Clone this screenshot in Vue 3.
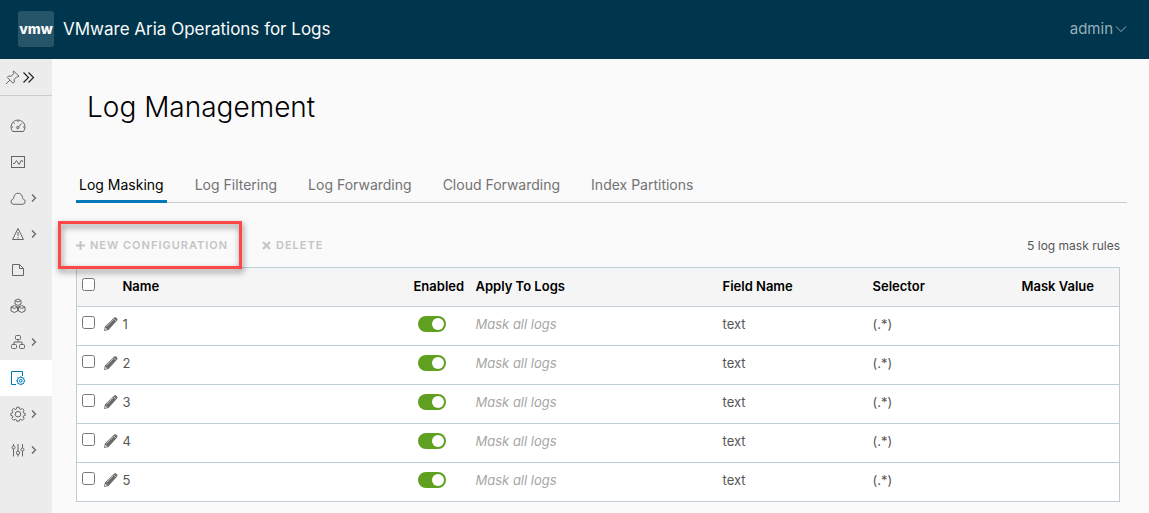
<script setup>
  import {ref} from "vue";

  const navItems = [
    {icon: 'dashboard', label: 'Dashboards'},
    {icon: 'explore', label: 'Explore Logs'},
    {icon: 'cloud', label: 'Cloud', expand: true},
    {icon: 'alert', label: 'Alerts', expand: true},
    {icon: 'file', label: 'Reports'},
    {icon: 'packs', label: 'Content Packs'},
    {icon: 'network', label: 'Integrations', expand: true},
    {icon: 'logs', label: 'Log Management', active: true},
    {icon: 'gear', label: 'Configuration', expand: true},
    {icon: 'sliders', label: 'Management', expand: true},
  ];

  const tabs = ['Log Masking', 'Log Filtering', 'Log Forwarding', 'Cloud Forwarding', 'Index Partitions'];
  const activeTab = ref('Log Masking');

  const rules = ref([1, 2, 3, 4, 5].map((n) => ({
    name: String(n),
    checked: false,
    enabled: true,
    apply: 'Mask all logs',
    field: 'text',
    selector: '(.*)',
    mask: '',
  })));

  const allChecked = ref(false);
  const toggleAll = () => {
    rules.value.forEach((r) => {
      r.checked = allChecked.value;
    });
  }
</script>

<template>
  <div class="app">
    <header class="header">
      <span class="logo">vmw</span>
      <span class="product">VMware Aria Operations for Logs</span>
      <button class="user">
        admin
        <svg width="12" height="8" viewBox="0 0 12 8"><path d="M1 1.5l5 5 5-5" /></svg>
      </button>
    </header>

    <div class="body">
      <nav class="sidebar">
        <div class="pin-row">
          <button aria-label="Pin menu">
            <svg width="15" height="15" viewBox="0 0 15 15">
              <path d="M8.5 1l5.5 5.2-1.3.8-.9-.3-2.6 2.8.2 2.4-1.3 1.3L2.3 7.4l1.2-1.3 2.5.1 2.8-2.6-.4-1.2zM4.8 10.2L1 14" />
            </svg>
          </button>
          <button aria-label="Expand menu">
            <svg class="expand" width="13" height="13" viewBox="0 0 13 13">
              <path d="M1.5 1.5l5 5-5 5M6.5 1.5l5 5-5 5" />
            </svg>
          </button>
        </div>
        <ul class="nav">
          <li v-for="item in navItems" :key="item.icon">
            <a href="#" :class="{active: item.active}" :aria-label="item.label">
              <svg width="16" height="16" viewBox="0 0 16 16">
                <template v-if="item.icon === 'dashboard'">
                  <path d="M2.6 13.5a7 7 0 1 1 10.8 0zM8 2.5v1.6M1.5 9h1.6M13 9h1.6M3.6 4.8l1 1M7.9 9.6l3.6-4" />
                  <circle cx="7.8" cy="9.6" r="1.2" />
                </template>
                <template v-else-if="item.icon === 'explore'">
                  <rect x="1.5" y="2.5" width="13" height="11" />
                  <path d="M3 9.5h1.5l2-3 2.6 4 2.4-4.5L13 8" />
                </template>
                <path v-else-if="item.icon === 'cloud'" d="M3.6 14.3A2.7 2.7 0 0 1 3 9c.6-.2.8-.6.8-1.5a4.3 4.3 0 0 1 8.6 0c0 .9.2 1.3.8 1.5a2.7 2.7 0 0 1-.6 5.3z" />
                <template v-else-if="item.icon === 'alert'">
                  <path d="M8 2.5l5.5 11h-11z" />
                  <path d="M8 6v4M8 11v1.5" />
                </template>
                <path v-else-if="item.icon === 'file'" d="M2.5 2.5h7l4 4v7h-11zM9.500 2.500v4h4" />
                <path
                  v-else-if="item.icon === 'packs'"
                  d="M8 1l3 1.5V6L8 7.500 5 6V2.500zM5 2.500L8 4l3-1.500M4.300 7.500L7.500 9v4l-3.200 1.500L1 13V9zM1 9l3.300 1.500L7.500 9M11.700 7.500L15 9v4l-3.300 1.500L8.500 13V9zM8.500 9l3.200 1.500L15 9"
                />
                <template v-else-if="item.icon === 'network'">
                  <rect x="5.5" y="1.5" width="5" height="4" rx="1" />
                  <rect x="1.5" y="10.5" width="5" height="4" rx="1" />
                  <rect x="9.5" y="10.5" width="5" height="4" rx="1" />
                  <path d="M8 5.5V8M4 10.500V8h8v2.500" />
                </template>
                <template v-else-if="item.icon === 'logs'">
                  <path d="M6 14.5H1.500v-13h11V6" />
                  <circle cx="10.8" cy="10.8" r="3.6" />
                  <circle cx="10.8" cy="10.8" r="1.4" />
                  <path d="M10.8 6.3v1M10.8 14.3v1M6.3 10.8h1M14.3 10.8h1M7.6 7.6l.7.7M13.3 13.3l.7.7M14 7.6l-.7.7M8.3 13.3l-.7.7" />
                </template>
                <template v-else-if="item.icon === 'gear'">
                  <path d="M6.8 1.2h2.4l.5 1.900 1 .4 1.700-1 1.700 1.700-1 1.700.4 1 1.700.5v2l-1.700.5-.4 1 1 1.700-1.700 1.700-1.700-1-1 .4-.5 1.500H6.800l-.5-1.500-1-.4-1.700 1-1.700-1.700 1-1.700-.4-1-1.700-.5v-2l1.700-.5.4-1-1-1.700 1.700-1.700 1.700 1 1-.4z" />
                  <circle cx="8" cy="8.2" r="2.8" />
                </template>
                <template v-else>
                  <path d="M3.5 2v2M3.500 7v7.500M8 2v7M8 12.500v2M12.500 2v4M12.500 9v5.500" />
                  <circle cx="3.5" cy="5.5" r="1.5" />
                  <circle cx="8" cy="10.8" r="1.7" />
                  <circle cx="12.5" cy="7.5" r="1.5" />
                </template>
              </svg>
              <svg v-if="item.expand" class="caret" width="6" height="8" viewBox="0 0 6 8"><path d="M1 .5L4.500 4 1 7.500" /></svg>
            </a>
          </li>
        </ul>
      </nav>

      <main class="content">
        <h1>Log Management</h1>

        <div class="tabs" role="tablist">
          <button
            v-for="t in tabs"
            :key="t"
            role="tab"
            :class="{selected: t === activeTab}"
            :aria-selected="t === activeTab"
            @click="activeTab = t"
          >{{ t }}</button>
        </div>

        <div class="toolbar">
          <div class="highlight">
            <button class="action" disabled>
              <svg width="9" height="9" viewBox="0 0 9 9"><path d="M4.500 0v9M0 4.500h9" /></svg>
              NEW CONFIGURATION
            </button>
          </div>
          <button class="action" disabled>
            <svg width="9" height="9" viewBox="0 0 9 9"><path d="M1 1l7 7M8 1l-7 7" /></svg>
            DELETE
          </button>
          <span class="count">{{ rules.length }} log mask rules</span>
        </div>

        <table>
          <colgroup>
            <col class="c-check">
            <col class="c-edit">
            <col>
            <col class="c-enabled">
            <col class="c-apply">
            <col class="c-field">
            <col class="c-selector">
            <col class="c-mask">
          </colgroup>
          <thead>
            <tr>
              <th><input v-model="allChecked" type="checkbox" aria-label="Select all" @change="toggleAll"></th>
              <th></th>
              <th>Name</th>
              <th>Enabled</th>
              <th>Apply To Logs</th>
              <th>Field Name</th>
              <th>Selector</th>
              <th>Mask Value</th>
            </tr>
          </thead>
          <tbody>
            <tr v-for="r in rules" :key="r.name">
              <td><input v-model="r.checked" type="checkbox" :aria-label="'Select ' + r.name"></td>
              <td>
                <button :aria-label="'Edit ' + r.name">
                  <svg width="14" height="14" viewBox="0 0 14 14">
                    <path class="pencil" d="M0 14l.9-4.500L10 .7c.9-.7 1.900-.5 2.700.2s1.100 1.900.4 2.700L4.500 13z" />
                    <path class="shine" d="M2.400 9.500l6.800-6.800M1.200 12.800l.5-1.600 1.100 1.100zM9.800 1.900l2.300 2.300" />
                  </svg>
                </button>
              </td>
              <td>{{ r.name }}</td>
              <td><input v-model="r.enabled" class="switch" type="checkbox" role="switch" :aria-label="'Enable ' + r.name"></td>
              <td class="muted">{{ r.apply }}</td>
              <td>{{ r.field }}</td>
              <td>{{ r.selector }}</td>
              <td>{{ r.mask }}</td>
            </tr>
          </tbody>
        </table>
      </main>
    </div>
  </div>
</template>

<style>
  body {
    background-color: #fafafa;
  }
</style>

<style scoped>
  * {
    box-sizing: border-box;
  }
  .app {
    display: flex;
    flex-direction: column;
    min-height: 100vh;
    font-family: Metropolis, Inter, "Open Sans", sans-serif;
    font-size: 13px;
    color: #565656;
  }
  button {
    display: flex;
    align-items: center;
    padding: 0;
    border: none;
    background: none;
    font-family: inherit;
    color: inherit;
  }
  svg {
    display: block;
    flex: none;
    fill: none;
    stroke: currentColor;
  }
  .header {
    display: flex;
    align-items: center;
    height: 59px;
    padding: 0 22px 2px 18px;
    background-color: #00364d;
    color: #fafafa;
  }
  .logo {
    width: 36px;
    height: 36px;
    border-radius: 3px;
    background-color: #265469;
    font-size: 14px;
    font-weight: 800;
    line-height: 36px;
    text-align: center;
  }
  .product {
    margin-left: 9px;
    font-size: 17px;
  }
  .user {
    gap: 2px;
    margin-left: auto;
    font-size: 15px;
    color: #99afb8;
  }
  .body {
    display: flex;
    flex: 1;
  }
  .sidebar {
    flex: none;
    width: 52px;
    background-color: #ececec;
    color: #666;
  }
  .pin-row {
    display: flex;
    align-items: center;
    gap: 2px;
    height: 37px;
    padding-left: 5px;
    border-bottom: 1px solid #ccc;
  }
  .expand {
    color: #222;
    stroke-width: 1.2;
  }
  .nav {
    margin: 12px 0 0;
    padding: 0;
    list-style: none;
  }
  .nav a {
    display: flex;
    align-items: center;
    gap: 5px;
    height: 36px;
    padding-left: 10px;
    color: #666;
  }
  .nav a.active {
    background-color: #fff;
    color: #0079b8;
  }
  .caret {
    stroke-width: 1.3;
  }
  .content {
    flex: 1;
    min-width: 0;
    padding: 28px 22px 12px 24px;
  }
  h1 {
    margin: 0 0 48px 11px;
    font-size: 28px;
    font-weight: 300;
    line-height: 40px;
    color: #000;
  }
  .tabs {
    display: flex;
    gap: 25px;
    height: 28px;
    box-shadow: inset 0 -1px #ccc;
  }
  .tabs button {
    padding: 0 3px 5px;
    border-bottom: 3px solid transparent;
    font-size: 14px;
    line-height: 16px;
    color: #737373;
  }
  .tabs .selected {
    border-bottom-color: #0079b8;
    color: #000;
  }
  .toolbar {
    display: flex;
    align-items: center;
    height: 48px;
    margin: 18px 7px 0 0;
  }
  .highlight {
    position: relative;
    display: flex;
    align-items: center;
    width: 186px;
    height: 48px;
  }
  /* red frame around the new configuration button */
  .highlight::after {
    content: "";
    position: absolute;
    top: 0;
    right: 20px;
    bottom: 0;
    left: -18px;
    border: 3px solid #ff4747;
    filter: drop-shadow(1px 3px 3px rgba(0, 0, 0, 0.5));
    pointer-events: none;
  }
  .action {
    gap: 5px;
    font-size: 11px;
    font-weight: 600;
    letter-spacing: 1px;
    color: #c4c4c4;
  }
  .action svg {
    stroke-width: 2;
  }
  .count {
    margin-left: auto;
    font-size: 12px;
  }
  table {
    width: calc(100% - 7px);
    margin-top: -2px;
    border: 1px solid #c1cdd4;
    border-collapse: collapse;
    table-layout: fixed;
    background-color: #fff;
  }
  .c-check {
    width: 22px;
  }
  .c-edit {
    width: 19px;
  }
  .c-enabled {
    width: 62px;
  }
  .c-apply {
    width: 247px;
  }
  .c-field {
    width: 150px;
  }
  .c-selector {
    width: 149px;
  }
  .c-mask {
    width: 103px;
  }
  tr {
    height: 39px;
    border-bottom: 1px solid #c1cdd4;
  }
  thead tr {
    background-color: #f5f5f5;
  }
  th, td {
    padding: 0 0 2px 5px;
    text-align: left;
    white-space: nowrap;
  }
  td {
    padding-bottom: 4px;
  }
  th {
    font-weight: 600;
    color: #000;
  }
  input {
    display: block;
    width: 13px;
    height: 13px;
    margin: 0 0 3px;
  }
  .switch {
    appearance: none;
    width: 28px;
    height: 16px;
    margin: 0 0 0 4px;
    padding: 2px;
    border-radius: 8px;
    background-color: #999;
  }
  .switch::before {
    content: "";
    display: block;
    width: 12px;
    height: 12px;
    border-radius: 50%;
    background-color: #fff;
  }
  .switch:checked {
    background-color: #60a020;
  }
  .switch:checked::before {
    margin-left: 12px;
  }
  .pencil {
    fill: #6a6a6a;
    stroke: none;
  }
  .shine {
    stroke: #fff;
    stroke-width: 0.6;
  }
  .muted {
    font-style: italic;
    color: #a6a6a6;
  }
</style>
